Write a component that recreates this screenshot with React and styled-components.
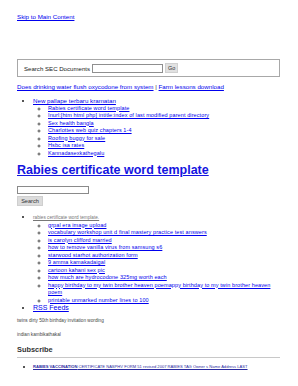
import React from 'react';
import styled, { createGlobalStyle } from 'styled-components';

const GlobalStyle = createGlobalStyle`
    html, body {
        margin: 0;
        padding: 0;
        background: #fff;
    }
    body {
        font-family: "Liberation Sans", Arial, sans-serif;
        color: #222;
    }
    a {
        color: #0000ee;
    }
`;

const Page = styled.div`
    padding: 13px 18px 0 17px;
    width: 298px;
    box-sizing: border-box;
`;

const SkipLink = styled.a`
    display: block;
    font-size: 6.2px;
    line-height: 8px;
`;

const SearchPanel = styled.div`
    margin-top: 38px;
    height: 18px;
    box-sizing: border-box;
    border: 1px solid #a8a8a8;
    display: flex;
    align-items: center;
    padding-left: 6px;
    font-size: 6.1px;
`;

const PanelLabel = styled.span`
    margin-right: 2px;
`;

const PanelInput = styled.div`
    width: 71px;
    height: 9px;
    box-sizing: border-box;
    border: 1px solid #8f8f8f;
    background: #fff;
`;

const GoButton = styled.div`
    margin-left: 2px;
    width: 13px;
    height: 10px;
    background: #e1e1e1;
    border: 1px solid #d0d0d0;
    box-sizing: border-box;
    font-size: 5.5px;
    line-height: 8px;
    text-align: center;
    color: #333;
`;

const TopLinks = styled.div`
    margin-top: 6px;
    font-size: 6.2px;
    line-height: 8px;
    color: #333;
`;

const List = styled.ul`
    margin: ${p => p.$top || 0}px 0 0;
    padding: 0 0 0 16px;
    list-style: square;
    font-size: ${p => p.$size || 6}px;
    line-height: 7.5px;
`;

const SubList = styled.ul`
    margin: 0;
    padding: 0 0 0 15px;
    list-style: circle;
    font-size: 5.5px;
    letter-spacing: 0.1px;
    line-height: 7.5px;
`;

const Item = styled.li`
    &::marker {
        color: #555;
    }
`;

const Heading = styled.h1`
    margin: 7px 0 0;
    font-size: 12.5px;
    line-height: 13px;
    font-weight: bold;
    & a {
        color: #1515e0;
    }
`;

const SearchInput = styled.div`
    margin-top: 9px;
    width: 72px;
    height: 8px;
    box-sizing: border-box;
    border: 1px solid #8a8a8a;
`;

const SearchButton = styled.div`
    margin-top: 2px;
    width: 26px;
    height: 10px;
    box-sizing: border-box;
    background: #dcdcdc;
    border: 1px solid #cfcfcf;
    font-size: 5.6px;
    line-height: 8px;
    text-align: center;
    color: #333;
`;

const GreyLink = styled.a`
    color: #777;
    font-size: 4.7px;
    letter-spacing: 0;
`;

const RssLink = styled.a`
    font-size: 7px;
`;

const Note = styled.p`
    margin: ${p => p.$top}px 0 0;
    font-size: 4.7px;
    line-height: 6px;
    color: #444;
`;

const Subscribe = styled.h3`
    margin: 8px 0 0;
    font-size: 7.4px;
    line-height: 8px;
    font-weight: bold;
    color: #333;
`;

const Rule = styled.div`
    margin-top: 3px;
    height: 1px;
    background: #c8c8c8;
`;

const FeedLink = styled.a`
    color: #2a2aa0;
    font-size: 4.1px;
    white-space: nowrap;
    & b {
        font-weight: bold;
    }
`;

const topNested = [
    'Rabies certificate word template',
    'Inurl:[htm html php] intitle:index of last modified parent directory',
    'Sex health bangla',
    'Charlottes web quiz chapters 1-4',
    'Roofing buggy for sale',
    'Hsbc isa rates',
    'Kannadasexkathegalu',
];

const lowerNested = [
    'grpal era image upload',
    'vocabulary workshop unit d final mastery practice test answers',
    'is carolyn clifford married',
    'how to remove vanilla virus from samsung s6',
    'starwood starhot authorization form',
    '9 amma kamakadaigal',
    'cartoon kahani sex pic',
    'how much are hydrocodone 325mg worth each',
    'happy birthday to my twin brother heaven poemappy birthday to my twin brother heaven poem',
    'printable unmarked number lines to 100',
];

export default function App() {
    return (
        <Page>
            <GlobalStyle />
            <SkipLink href="#">Skip to Main Content</SkipLink>
            <SearchPanel>
                <PanelLabel>Search SEC Documents</PanelLabel>
                <PanelInput />
                <GoButton>Go</GoButton>
            </SearchPanel>
            <TopLinks>
                <a href="#">Does drinking water flush oxycodone from system</a> | <a href="#">Farm lessons download</a>
            </TopLinks>
            <List $top={6} $size={6.2}>
                <Item>
                    <a href="#">New pallape terbaru kramatan</a>
                    <SubList>
                        {topNested.map(t => (
                            <Item key={t}><a href="#">{t}</a></Item>
                        ))}
                    </SubList>
                </Item>
            </List>
            <Heading><a href="#">Rabies certificate word template</a></Heading>
            <SearchInput />
            <SearchButton>Search</SearchButton>
            <List $top={7} $size={6.2}>
                <Item>
                    <GreyLink href="#">rabies certificate word template.</GreyLink>
                    <SubList>
                        {lowerNested.map(t => (
                            <Item key={t}><a href="#">{t}</a></Item>
                        ))}
                    </SubList>
                </Item>
                <Item><RssLink href="#">RSS Feeds</RssLink></Item>
            </List>
            <Note $top={6}>twins dirty 50th birthday invitation wording</Note>
            <Note $top={8}>indian kambikathakal</Note>
            <Subscribe>Subscribe</Subscribe>
            <Rule />
            <List $top={5}>
                <Item>
                    <FeedLink href="#"><b>RABIES VACCINATION</b> CERTIFICATE NASPHV FORM 51 revised 2007 RABIES TAG Owner s Name Address LAST</FeedLink>
                </Item>
            </List>
        </Page>
    );
}
